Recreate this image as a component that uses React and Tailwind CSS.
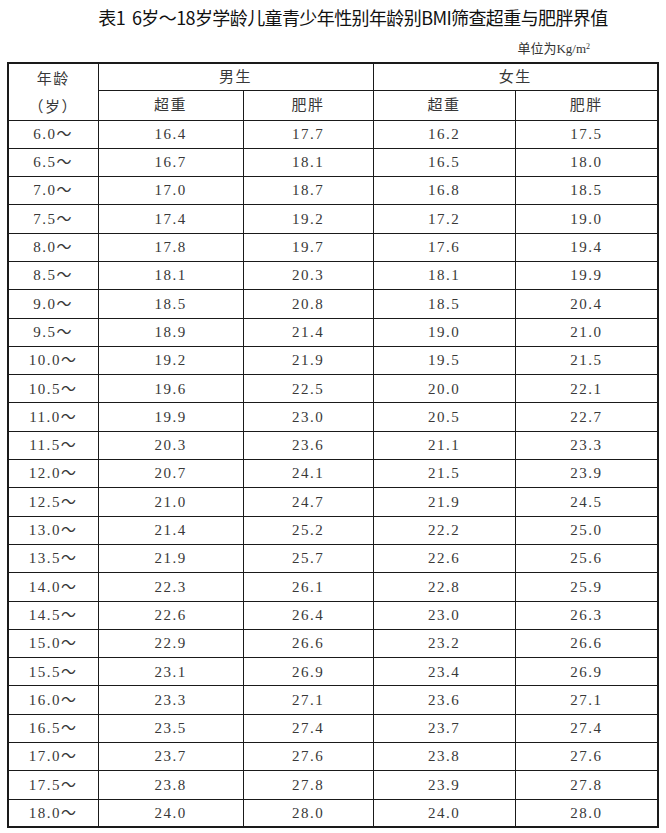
import React from "react";

const rows = [
  ["6.0～", "16.4", "17.7", "16.2", "17.5"],
  ["6.5～", "16.7", "18.1", "16.5", "18.0"],
  ["7.0～", "17.0", "18.7", "16.8", "18.5"],
  ["7.5～", "17.4", "19.2", "17.2", "19.0"],
  ["8.0～", "17.8", "19.7", "17.6", "19.4"],
  ["8.5～", "18.1", "20.3", "18.1", "19.9"],
  ["9.0～", "18.5", "20.8", "18.5", "20.4"],
  ["9.5～", "18.9", "21.4", "19.0", "21.0"],
  ["10.0～", "19.2", "21.9", "19.5", "21.5"],
  ["10.5～", "19.6", "22.5", "20.0", "22.1"],
  ["11.0～", "19.9", "23.0", "20.5", "22.7"],
  ["11.5～", "20.3", "23.6", "21.1", "23.3"],
  ["12.0～", "20.7", "24.1", "21.5", "23.9"],
  ["12.5～", "21.0", "24.7", "21.9", "24.5"],
  ["13.0～", "21.4", "25.2", "22.2", "25.0"],
  ["13.5～", "21.9", "25.7", "22.6", "25.6"],
  ["14.0～", "22.3", "26.1", "22.8", "25.9"],
  ["14.5～", "22.6", "26.4", "23.0", "26.3"],
  ["15.0～", "22.9", "26.6", "23.2", "26.6"],
  ["15.5～", "23.1", "26.9", "23.4", "26.9"],
  ["16.0～", "23.3", "27.1", "23.6", "27.1"],
  ["16.5～", "23.5", "27.4", "23.7", "27.4"],
  ["17.0～", "23.7", "27.6", "23.8", "27.6"],
  ["17.5～", "23.8", "27.8", "23.9", "27.8"],
  ["18.0～", "24.0", "28.0", "24.0", "28.0"],
];

const cell = "border-[1.5px] border-[#1a1a1a] text-center align-middle p-0";

export default function App() {
  return (
    <div className="w-[666px] h-[833px] bg-white overflow-hidden font-['Liberation_Serif','Noto_Sans_CJK_SC',serif] text-[#383838]">
      {/* 标题 */}
      <div className="pt-[5px] pl-[40px] text-center text-[18px] leading-[24px] font-normal tracking-[-0.6px] text-[#111] font-['Noto_Sans_CJK_SC',sans-serif]">
        表1&nbsp;&nbsp;6岁～18岁学龄儿童青少年性别年龄别BMI筛查超重与肥胖界值
      </div>
      <div className="mt-[12px] pr-[76px] text-right text-[13px] leading-[16px] text-[#333]">
        单位为Kg/m<sup className="text-[8px]">2</sup>
      </div>

      <div className="pl-[7px] mt-[5px]">
        <table className="w-[650px] table-fixed border-collapse border-2 border-[#1a1a1a] text-[15px] tracking-[1.5px]">
          <colgroup>
            <col className="w-[90px]" />
            <col className="w-[145px]" />
            <col className="w-[130px]" />
            <col className="w-[142px]" />
            <col className="w-[143px]" />
          </colgroup>
          <thead>
            <tr className="h-[27px]">
              <td className={cell + " leading-[20px] pt-[2px]"} rowSpan={2}>
                <div>年龄</div>
                <div className="mt-[8px]">（岁）</div>
              </td>
              <td className={cell} colSpan={2}>男生</td>
              <td className={cell} colSpan={2}>女生</td>
            </tr>
            <tr className="h-[30px]">
              <td className={cell}>超重</td>
              <td className={cell}>肥胖</td>
              <td className={cell}>超重</td>
              <td className={cell}>肥胖</td>
            </tr>
          </thead>
          <tbody>
            {rows.map((r) => (
              <tr key={r[0]} className="h-[28.3px]">
                {r.map((v, i) => (
                  <td key={i} className={cell}>
                    {v}
                  </td>
                ))}
              </tr>
            ))}
          </tbody>
        </table>
      </div>
    </div>
  );
}
